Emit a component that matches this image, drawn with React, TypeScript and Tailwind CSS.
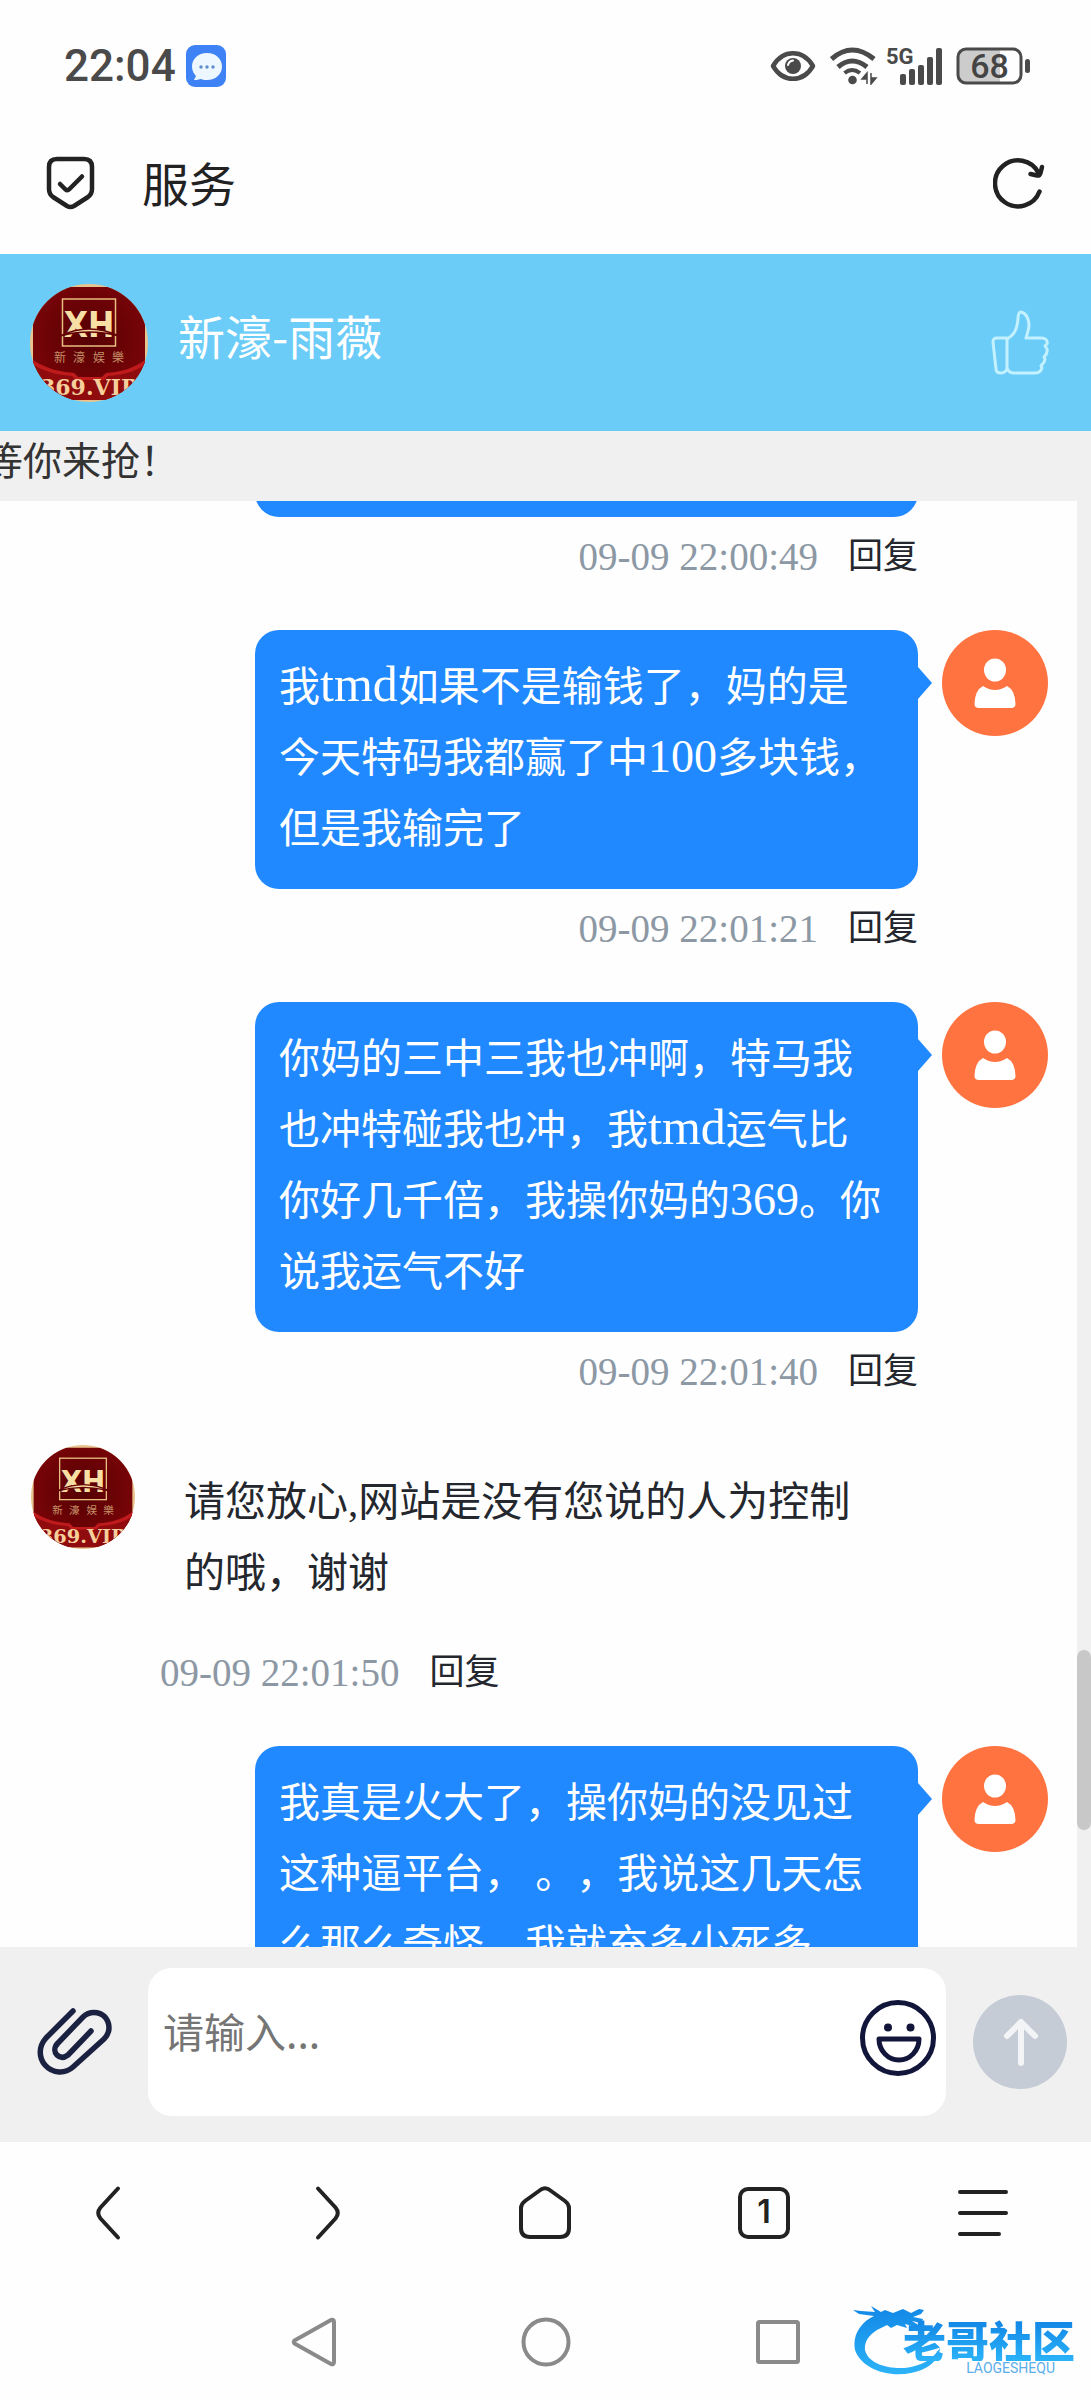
import type { ReactNode } from "react";

const SERIF = "font-['Liberation_Serif','Noto_Sans_CJK_SC',serif]";

function BrandAvatar({ className }: { className: string }) {
  return (
    <svg viewBox="0 0 118 118" className={className} role="img" aria-label="新濠娱樂">
      <defs>
        <clipPath id="brand-round">
          <circle cx="59" cy="59" r="59" />
        </clipPath>
        <radialGradient id="brand-red" cx="50%" cy="45%" r="60%">
          <stop offset="0" stopColor="#550003" />
          <stop offset="1" stopColor="#7d0508" />
        </radialGradient>
      </defs>
      <g clipPath="url(#brand-round)">
        <rect width="118" height="118" fill="#e9c48e" />
        <rect x="3" y="3" width="112" height="113" rx="4" fill="url(#brand-red)" />
        <path d="M3 76C18 86 32 88 44 89L48 93H72L76 89C92 88 104 84 115 76V116H3Z" fill="#8f0b0d" />
        <path d="M3 76C18 86 32 88 44 89L48 93H72L76 89C92 88 104 84 115 76V81C104 88 92 91 78 92L74 96H46L42 92C30 91 18 89 3 81Z" fill="#bf1a1c" />
        <rect x="32.5" y="15" width="53" height="47" fill="none" stroke="#e8be80" strokeWidth="1.5" />
        <text x="59" y="53" fontSize="35" fontWeight="700" textAnchor="middle" fontFamily="'DejaVu Sans Condensed', Roboto, sans-serif" fill="#f8dfa4">
          XH
        </text>
        <path d="M30 52Q59 38 89 52Q59 44 30 52Z" fill="#f8dfa4" stroke="#650205" strokeWidth="1.5" />
        <g fill="#c58f68" fontFamily="'Noto Sans CJK SC', sans-serif" fontSize="12" textAnchor="middle">
          <text x="30" y="78">新</text>
          <text x="49" y="78">濠</text>
          <text x="69" y="78">娱</text>
          <text x="88" y="78">樂</text>
        </g>
        <text x="10" y="111" fontSize="22" fontWeight="700" fontFamily="'DejaVu Serif', serif" fill="#f7cf9b">
          369.VIP
        </text>
      </g>
    </svg>
  );
}

function StatusBar() {
  return (
    <div className="flex h-[132px] shrink-0 items-center justify-between pr-[60px] pl-16 text-[#4a4a4a]">
      <div className="flex items-center gap-2.5">
        <span className="font-[Roboto,sans-serif] text-[44px] leading-none font-medium">22:04</span>
        <svg viewBox="0 0 40 42" className="h-[42px] w-10" aria-hidden="true">
          <rect width="40" height="42" rx="9" fill="#3f82f5" />
          <path d="M21 8C12 8 6 14 6 21.500C6 26 8 29 10 31L8 35C11 35 13 34.500 15 34C17 35 19 35 21 35C30 35 36 29 36 21.500C36 14 30 8 21 8Z" fill="#edf7ff" />
          <g fill="#5f8dc9">
            <circle cx="15" cy="22" r="1.700" />
            <circle cx="21" cy="22" r="1.700" />
            <circle cx="27" cy="22" r="1.700" />
          </g>
        </svg>
      </div>
      <div className="flex items-center">
        <svg viewBox="0 0 46 32" className="mr-3.5 h-8 w-[46px]" aria-hidden="true">
          <path d="M3 16C13 -1 33 -1 43 16C33 33 13 33 3 16Z" fill="none" stroke="#4a4a4a" strokeWidth="4.500" strokeLinejoin="round" />
          <circle cx="23" cy="16" r="8" fill="#4a4a4a" />
          <path d="M18 15Q19 11 23 10.500" fill="none" stroke="#fff" strokeWidth="2" strokeLinecap="round" />
        </svg>
        <svg viewBox="0 0 48 38" className="mr-2 h-[38px] w-12" aria-hidden="true">
          <g fill="none" stroke="#4a4a4a" strokeWidth="5">
            <path d="M1.500 12Q22 -6 44 12" />
            <path d="M8 20Q22 8 37 20" />
            <path d="M14.500 26Q22 20 30 26" strokeWidth="4" />
          </g>
          <circle cx="22.500" cy="33" r="4.300" fill="#4a4a4a" />
          <path d="M37 37V31M37 26L32 32H37ZM41 26V37M41 37L46 31H41Z" fill="#4a4a4a" stroke="#4a4a4a" strokeWidth="1.500" />
        </svg>
        <svg viewBox="0 -6 58 52" className="mr-3 h-[52px] w-[58px]" role="img" aria-label="5G">
          <text x="0" y="18" fontSize="22" fontWeight="700" fontFamily="Roboto, sans-serif" fill="#4a4a4a">
            5G
          </text>
          <g fill="#4a4a4a">
            <rect x="14" y="28" width="6" height="11" rx="2" />
            <rect x="23" y="23" width="6" height="16" rx="2" />
            <rect x="32" y="19" width="6" height="20" rx="2" />
            <rect x="41" y="11" width="6" height="28" rx="2" />
            <rect x="50" y="2" width="6" height="37" rx="2" />
          </g>
        </svg>
        <svg viewBox="0 0 75 38" className="h-[38px] w-[75px]" role="img" aria-label="68">
          <path d="M10 2H44V36H10Q2 36 2 28V10Q2 2 10 2Z" fill="#cccccc" />
          <rect x="2" y="2" width="63" height="34" rx="8" fill="none" stroke="#4a4a4a" strokeWidth="3" />
          <rect x="69" y="12" width="5" height="14" rx="2.500" fill="#4a4a4a" />
          <text x="33.500" y="31" fontSize="34" fontWeight="500" textAnchor="middle" fontFamily="Roboto, sans-serif" fill="#444">
            68
          </text>
        </svg>
      </div>
    </div>
  );
}

function TitleBar() {
  return (
    <div className="flex h-[122px] shrink-0 items-center pr-[46px] pb-5 pl-[46px]">
      <svg viewBox="0 0 49 54" className="h-[54px] w-[49px]" fill="none" stroke="#222" strokeWidth="4.500" strokeLinecap="round" strokeLinejoin="round" aria-hidden="true">
        <path d="M11 3H38Q46 3 46 11V33Q46 38 42 41L28 50Q24.500 52 21 50L7 41Q3 38 3 33V11Q3 3 11 3Z" />
        <path d="M14 28L19.500 33.500Q21.500 35 23.500 33L36 20.500" />
      </svg>
      <h1 className="ml-[47px] flex-1 pb-1 font-['Noto_Sans_CJK_SC',sans-serif] text-[47px] leading-none text-[#222]">服务</h1>
      <button type="button" aria-label="刷新">
        <svg viewBox="0 0 52 52" className="h-[52px] w-[52px]" fill="none" stroke="#222" strokeWidth="4.500" strokeLinecap="round" strokeLinejoin="round">
          <path d="M46.500 34.500A23 23 0 1 1 45.500 16" />
          <path d="M37.500 17L44 18.500Q47 19 47.500 16L49 10" />
        </svg>
      </button>
    </div>
  );
}

function AgentHeader() {
  return (
    <header className="flex h-[177px] shrink-0 items-center bg-[#6bccf8] pr-[42px] pl-[30px]">
      <BrandAvatar className="h-[118px] w-[118px]" />
      <h2 className="ml-[30px] flex-1 pb-4 font-['Noto_Sans_CJK_SC',sans-serif] text-[47px] leading-none text-white">新濠-雨薇</h2>
      <button type="button" aria-label="点赞">
        <svg viewBox="0 0 58 66" className="h-[66px] w-[58px]" fill="none" stroke="#c3f1ff" strokeWidth="3" strokeLinejoin="round">
          <path d="M16 28H6C3 28 2 29 2 32L5 59C5 62 7 63 10 63C13 63 16 61 16 58Z" />
          <path d="M16 29C23 25 26 20 27 9C27 5 28 2 30 2C35 3 38 9 38 15C38 20 36 24 35 28H50C55 28 57 31 56 34L54 36L56 39C57 43 55 45 53 47L54 49C54 53 51 54 50 56L51 58C50 61 48 63 44 63H23C19 63 17 61 16 58" />
        </svg>
      </button>
    </header>
  );
}

function UserAvatar() {
  return (
    <svg viewBox="0 0 106 106" className="ml-6 h-[106px] w-[106px] shrink-0" role="img" aria-label="用户">
      <circle cx="53" cy="53" r="53" fill="#ff7340" />
      <g fill="#fff">
        <ellipse cx="53" cy="40" rx="11" ry="11.500" />
        <path d="M41 56Q53 64 65 56Q73 60 73.500 74Q73.500 78 69 78H37Q32.500 78 32.500 74Q33 60 41 56Z" />
      </g>
    </svg>
  );
}

function Meta({ time }: { time: string }) {
  return (
    <div className={`mb-[35px] flex h-[78px] items-center gap-[30px] ${SERIF}`}>
      <time className="text-[39px] leading-none text-[#8c98a4]">{time}</time>
      <button type="button" className="text-[35px] leading-none text-[#24272d]">
        回复
      </button>
    </div>
  );
}

function UserMessage({ time, children }: { time: string; children?: ReactNode }) {
  return (
    <article className="flex items-start pr-[29px] pl-[255px]">
      <div className="flex min-w-0 flex-1 flex-col items-end">
        <div className="relative w-full rounded-3xl bg-[#2189ff] px-6 pt-[22px] pb-6">
          <p className={`min-h-[142px] text-[41px] leading-[71px] [text-spacing-trim:space-all] whitespace-pre-line text-white ${SERIF}`}>{children}</p>
          <span className="absolute top-[37px] left-full border-y-[16px] border-l-[14px] border-y-transparent border-l-[#2189ff]" />
        </div>
        <Meta time={time} />
      </div>
      <UserAvatar />
    </article>
  );
}

function AgentMessage({ time, children }: { time: string; children: ReactNode }) {
  return (
    <article className="flex items-start pr-[160px] pl-[31px]">
      <BrandAvatar className="h-[104px] w-[104px] shrink-0" />
      <div className="ml-[25px] min-w-0 flex-1">
        <p className={`px-6 pt-[22px] pb-6 text-[41px] leading-[71px] whitespace-pre-line text-[#24272d] ${SERIF}`}>{children}</p>
        <Meta time={time} />
      </div>
    </article>
  );
}

function Latin({ children }: { children: string }) {
  return <span className="text-[50px] leading-none">{children}</span>;
}

function Digits({ children }: { children: string }) {
  return <span className="text-[46px] leading-none">{children}</span>;
}

function Conversation() {
  return (
    <main className="flex min-h-0 flex-1 overflow-hidden">
      <div className="min-w-0 flex-1">
        <div className="-mt-[172px]">
          <UserMessage time="09-09 22:00:49" />
        </div>
        <UserMessage time="09-09 22:01:21">
          我<Latin>tmd</Latin>如果不是输钱了，妈的是{"\n"}今天特码我都赢了中<Digits>100</Digits>多块钱，{"\n"}但是我输完了
        </UserMessage>
        <UserMessage time="09-09 22:01:40">
          你妈的三中三我也冲啊，特马我{"\n"}也冲特碰我也冲，我<Latin>tmd</Latin>运气比{"\n"}你好几千倍，我操你妈的<Digits>369</Digits>。你{"\n"}说我运气不好
        </UserMessage>
        <AgentMessage time="09-09 22:01:50">请您放心,网站是没有您说的人为控制{"\n"}的哦，谢谢</AgentMessage>
        <UserMessage time="09-09 22:02:10">
          我真是火大了，操你妈的没见过{"\n"}这种逼平台， 。，我说这几天怎{"\n"}么那么奇怪，我就充多少死多
        </UserMessage>
      </div>
      <div className="w-3.5 shrink-0 bg-[#f0f0f0] pt-[1149px]">
        <div className="h-[180px] rounded-lg bg-[#c8c8c8]" />
      </div>
    </main>
  );
}

function Composer() {
  return (
    <form className="flex shrink-0 items-center bg-[#f0f0f0] pt-[21px] pr-6 pb-[26px] pl-[34px]" onSubmit={(e) => e.preventDefault()}>
      <button type="button" aria-label="附件" className="w-[114px]">
        <svg viewBox="0 0 80 74" className="h-[74px] w-20" fill="none" stroke="#1b2140" strokeWidth="5.500" strokeLinecap="round" strokeLinejoin="round">
          <path d="M39 6L12 33C4 42 5 53 11 60C19 69 31 69 39 62L70 34C77 27 76 18 71 12C65 6 55 6 49 12L24 38C20 42 20 47 23 50C26 53 30 53 34 50L57 26" />
        </svg>
      </button>
      <div className="flex h-[148px] flex-1 items-center rounded-3xl bg-white pr-2.5 pl-[15px]">
        <input
          type="text"
          aria-label="请输入"
          placeholder="请输入..."
          className="min-w-0 flex-1 pb-[22px] font-['Noto_Sans_CJK_SC',sans-serif] text-[41px] outline-none placeholder:text-[#757575]"
        />
        <button type="button" aria-label="表情" className="mb-2">
          <svg viewBox="0 0 76 76" className="h-[76px] w-[76px]" fill="none" stroke="#12163a" strokeWidth="5" strokeLinejoin="round">
            <circle cx="38" cy="38" r="35.500" />
            <path d="M19 39H59A20 21 0 0 1 19 39Z" />
            <g fill="#12163a" stroke="none">
              <circle cx="28" cy="27.500" r="4" />
              <circle cx="50.500" cy="27.500" r="4" />
            </g>
          </svg>
        </button>
      </div>
      <button type="submit" aria-label="发送" className="ml-[27px]">
        <svg viewBox="0 0 94 94" className="h-[94px] w-[94px]">
          <circle cx="47" cy="47" r="47" fill="#c5ccd5" />
          <path d="M48 27V68M34 41L48 27L62 41" fill="none" stroke="#f2f4f6" strokeWidth="6" strokeLinecap="round" strokeLinejoin="round" />
        </svg>
      </button>
    </form>
  );
}

function NavButton({ label, children }: { label: string; children: ReactNode }) {
  return (
    <button type="button" aria-label={label} className="flex items-center justify-center">
      <svg viewBox="0 0 56 56" className="h-14 w-14" fill="none" stroke="#222" strokeWidth="4" strokeLinecap="round" strokeLinejoin="round">
        {children}
      </svg>
    </button>
  );
}

function BrowserNav() {
  return (
    <nav className="grid h-[142px] shrink-0 grid-cols-5" aria-label="浏览器">
      <NavButton label="后退">
        <path d="M37 3.500L19.500 22.500Q15 28 19.500 33.500L37 52.500" />
      </NavButton>
      <NavButton label="前进">
        <path d="M19 3.500L36.500 22.500Q41 28 36.500 33.500L19 52.500" />
      </NavButton>
      <NavButton label="主页">
        <path d="M24 4.500Q28 2 32 4.500L48 16Q52 19 52 23V43Q52 52 43 52H13Q4 52 4 43V23Q4 19 8 16Z" />
      </NavButton>
      <NavButton label="标签页">
        <rect x="4" y="4" width="48" height="48" rx="8" />
        <text x="28" y="38" fontSize="32" fontWeight="600" textAnchor="middle" fontFamily="Inter, sans-serif" fill="#222" stroke="none">
          1
        </text>
      </NavButton>
      <NavButton label="菜单">
        <path d="M6 7H52M6 28H52M6 49H45" />
      </NavButton>
    </nav>
  );
}

function Watermark() {
  return (
    <div className="absolute right-4 bottom-[21px] flex h-[74px] w-[222px] flex-col items-end" aria-hidden="true">
      <svg viewBox="0 0 100 74" className="absolute top-0 left-0 h-[74px] w-[100px]">
        <defs>
          <linearGradient id="dragon" x1="0" y1="0" x2="0" y2="1">
            <stop offset="0" stopColor="#1287e6" />
            <stop offset="1" stopColor="#2bb3f8" />
          </linearGradient>
        </defs>
        <path
          fill="url(#dragon)"
          d="M0 5L8 6L22 7L18 1L28 7L32 5L40 8L50 4L58 8L66 4L71 5L68 9L60 12L70 14L68 18L59 16L67 21L63 22L52 19L54 23L44 20L38 23L34 20L28 23C17 28 11 36 12 45C15 58 33 64 52 63C69 61 80 54 87 43C86 55 75 65 58 68C34 73 8 63 2 45C-1 30 8 17 21 11L6 9Z"
        />
      </svg>
      <span className="relative mt-3 bg-linear-to-b from-[#1282e4] to-[#2bb3f8] bg-clip-text font-['Noto_Sans_CJK_SC',sans-serif] text-[43px] leading-[44px] font-black text-transparent">
        老哥社区
      </span>
      <span className="relative mr-5 font-[Roboto,sans-serif] text-[14px] leading-none text-[#5aaeea]">LAOGESHEQU</span>
    </div>
  );
}

function SystemNav() {
  return (
    <nav className="relative flex h-[116px] shrink-0 items-center justify-center gap-[180px]" aria-label="系统">
      <button type="button" aria-label="返回">
        <svg viewBox="0 0 52 52" className="h-[52px] w-[52px]" fill="none" stroke="#8a8a8a" strokeWidth="4" strokeLinejoin="round">
          <path d="M6.500 24.500L43 4Q46 3 46 6V46Q46 49 43 48L6.500 27.500Q5 26 6.500 24.500Z" />
        </svg>
      </button>
      <button type="button" aria-label="桌面">
        <svg viewBox="0 0 52 52" className="h-[52px] w-[52px]" fill="none" stroke="#8a8a8a" strokeWidth="4">
          <circle cx="26" cy="26" r="22.500" />
        </svg>
      </button>
      <button type="button" aria-label="最近任务">
        <svg viewBox="0 0 52 52" className="h-[52px] w-[52px]" fill="none" stroke="#8a8a8a" strokeWidth="4">
          <rect x="6" y="6" width="40" height="40" rx="1.500" />
        </svg>
      </button>
      <Watermark />
    </nav>
  );
}

export default function App() {
  return (
    <div className="flex h-screen flex-col overflow-hidden bg-[#fefefe]">
      <StatusBar />
      <TitleBar />
      <AgentHeader />
      <div className="flex h-[70px] shrink-0 items-center overflow-hidden bg-[#f0f0f0] pb-4">
        <p className="-ml-4 font-['Noto_Sans_CJK_SC',sans-serif] text-[39px] leading-none whitespace-nowrap text-[#333]">等你来抢！</p>
      </div>
      <Conversation />
      <Composer />
      <BrowserNav />
      <SystemNav />
    </div>
  );
}
